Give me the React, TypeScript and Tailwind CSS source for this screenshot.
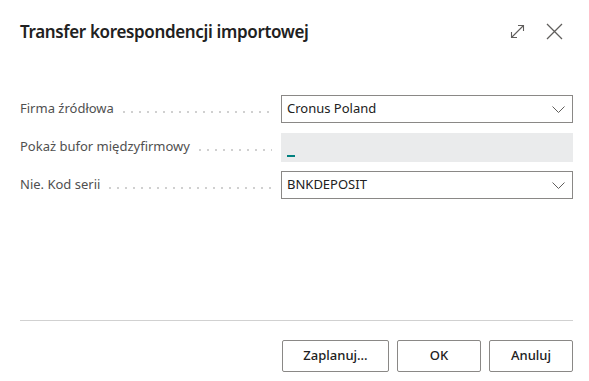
import React from 'react';

const fields = [
  { label: 'Firma źródłowa', value: 'Cronus Poland', kind: 'select' },
  { label: 'Pokaż bufor międzyfirmowy', value: '_', kind: 'readonly' },
  { label: 'Nie. Kod serii', value: 'BNKDEPOSIT', kind: 'select' },
];

const Chevron = () => (
  <svg width="13" height="7" viewBox="0 0 13 7" fill="none" stroke="#605e5c" strokeWidth="1">
    <path d="M0.5 0.5l6 6 6-6" />
  </svg>
);

const App: React.FC = () => {
  return (
    <div className="w-[589px] h-[381px] bg-white flex flex-col font-['Noto_Sans',sans-serif] text-[#212121]">
      {/* Nagłówek */}
      <div className="flex items-center justify-between pl-5 pr-[26px] pt-[17px] h-[46px]">
        <h1 className="text-[17px] font-semibold tracking-[-0.35px]">Transfer korespondencji importowej</h1>
        <div className="flex items-center gap-[21px]">
          <svg width="15" height="15" viewBox="0 0 15 15" fill="none" stroke="#605e5c" strokeWidth="1.1">
            <path d="M1.5 13.5l12-12M8 1.5h5.5V7M1.5 8v5.5H7" />
          </svg>
          <svg width="17" height="17" viewBox="0 0 17 17" fill="none" stroke="#605e5c" strokeWidth="1.3">
            <path d="M1 1l15 15M16 1L1 16" />
          </svg>
        </div>
      </div>

      {/* Pola */}
      <div className="flex flex-col gap-[10px] pl-5 pr-[16px] pt-[49px]">
        {fields.map((f) => (
          <div key={f.label} className="flex items-center h-[28px]">
            <div className="w-[252px] flex items-center gap-[9px] shrink-0">
              <span className="text-[13px] text-[#505050] whitespace-nowrap">{f.label}</span>
              <span className="flex-1 h-[2px] mt-[5px] bg-[linear-gradient(to_right,#d0d0d0_2px,transparent_2px)] bg-[length:8px_2px] bg-repeat-x" />
            </div>
            <div className="w-[9px]" />
            {f.kind === 'select' ? (
              <div className="flex-1 h-[28px] border border-[#8a8886] flex items-center justify-between pl-[5px] pr-[7px]">
                <span className="text-[13px] text-[#212121]">{f.value}</span>
                <Chevron />
              </div>
            ) : (
              <div className="flex-1 h-[29px] bg-[#eaebec] flex items-end pl-[6px] pb-[4px]">
                <span className="w-[8px] h-[2px] bg-[#00807f] mb-[1px]" />
              </div>
            )}
          </div>
        ))}
      </div>

      <div className="flex-1" />

      {/* Stopka */}
      <div className="mx-5 mr-[16px] border-t border-[#d1d1d1]" />
      <div className="flex justify-end gap-[8px] pr-[16px] pt-[19px] pb-[9px]">
        <button className="w-[107px] h-[32px] border border-[#8a8886] rounded-[2px] text-[13px] font-medium text-[#212121]">
          Zaplanuj...
        </button>
        <button className="w-[84px] h-[32px] border border-[#8a8886] rounded-[2px] text-[13px] font-medium text-[#212121]">
          OK
        </button>
        <button className="w-[84px] h-[32px] border border-[#8a8886] rounded-[2px] text-[13px] font-medium text-[#212121]">
          Anuluj
        </button>
      </div>
    </div>
  );
};

export default App;
